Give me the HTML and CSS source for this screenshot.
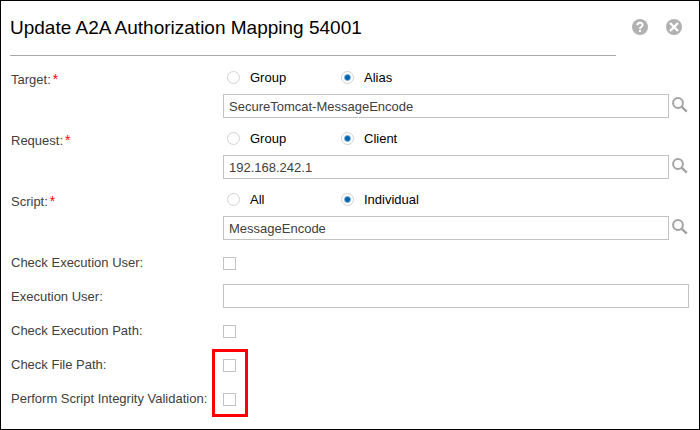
FILE: index.html
```html
<!DOCTYPE html>
<html lang="en">
<head>
<meta charset="utf-8">
<title>Update A2A Authorization Mapping 54001</title>
<link rel="stylesheet" href="styles.css">
</head>
<body>
<svg class="symbols" aria-hidden="true">
  <symbol id="search" viewBox="0 0 16 16">
    <circle cx="6" cy="6" r="4.9" fill="none" stroke="#a3a3a3" stroke-width="2"/>
    <path d="M9.6 9.6 L14.8 14.6" fill="none" stroke="#a3a3a3" stroke-width="2.4"/>
  </symbol>
</svg>
<main class="dialog">
  <header class="header">
    <h1 class="title">Update A2A Authorization Mapping 54001</h1>
    <div class="actions">
      <button class="icon-button" type="button" aria-label="Help">
        <svg width="16" height="16" viewBox="0 0 16 16">
          <circle cx="8" cy="8" r="8" fill="#b1b1b1"/>
          <path d="M5.4 6.3 C5.4 3 10.6 3 10.6 6 C10.6 7.8 8 7.7 8 9.9" fill="none" stroke="#fff" stroke-width="2"/>
          <rect x="7" y="11" width="2" height="2" fill="#fff"/>
        </svg>
      </button>
      <button class="icon-button" type="button" aria-label="Close">
        <svg width="16" height="16" viewBox="0 0 16 16">
          <circle cx="8" cy="8" r="8" fill="#b1b1b1"/>
          <path d="M4 4 L12 12 M12 4 L4 12" fill="none" stroke="#fff" stroke-width="2.4"/>
        </svg>
      </button>
    </div>
  </header>
  <form class="form">
    <div class="row">
      <label class="label" for="target">Target:<span class="required">*</span></label>
      <div class="field">
        <div class="choices">
          <label class="choice"><input class="radio" type="radio" name="target-kind">Group</label>
          <label class="choice"><input class="radio" type="radio" name="target-kind" checked>Alias</label>
        </div>
        <div class="lookup">
          <input class="text" id="target" type="text" value="SecureTomcat-MessageEncode">
          <button class="icon-button" type="button" aria-label="Find target"><svg width="16" height="16"><use href="#search"/></svg></button>
        </div>
      </div>
    </div>
    <div class="row">
      <label class="label" for="request">Request:<span class="required">*</span></label>
      <div class="field">
        <div class="choices">
          <label class="choice"><input class="radio" type="radio" name="request-kind">Group</label>
          <label class="choice"><input class="radio" type="radio" name="request-kind" checked>Client</label>
        </div>
        <div class="lookup">
          <input class="text" id="request" type="text" value="192.168.242.1">
          <button class="icon-button" type="button" aria-label="Find request"><svg width="16" height="16"><use href="#search"/></svg></button>
        </div>
      </div>
    </div>
    <div class="row">
      <label class="label" for="script">Script:<span class="required">*</span></label>
      <div class="field">
        <div class="choices">
          <label class="choice"><input class="radio" type="radio" name="script-kind">All</label>
          <label class="choice"><input class="radio" type="radio" name="script-kind" checked>Individual</label>
        </div>
        <div class="lookup">
          <input class="text" id="script" type="text" value="MessageEncode">
          <button class="icon-button" type="button" aria-label="Find script"><svg width="16" height="16"><use href="#search"/></svg></button>
        </div>
      </div>
    </div>
    <div class="row">
      <label class="label" for="check-user">Check Execution User:</label>
      <input class="checkbox" id="check-user" type="checkbox">
    </div>
    <div class="row">
      <label class="label" for="user">Execution User:</label>
      <input class="text" id="user" type="text">
    </div>
    <div class="row">
      <label class="label" for="check-path">Check Execution Path:</label>
      <input class="checkbox" id="check-path" type="checkbox">
    </div>
    <div class="highlighted">
      <div class="row">
        <label class="label" for="check-file">Check File Path:</label>
        <input class="checkbox" id="check-file" type="checkbox">
      </div>
      <div class="row">
        <label class="label" for="integrity">Perform Script Integrity Validation:</label>
        <input class="checkbox" id="integrity" type="checkbox">
      </div>
    </div>
  </form>
</main>
</body>
</html>
```
FILE: styles.css
```css
*,
*::after {
  box-sizing: border-box;
}

body {
  margin: 0;
  background: #fff;
  color: #404040;
  font: 13px/26px "Liberation Sans", Arial, sans-serif;
}

.symbols {
  display: none;
}

.dialog {
  min-height: 100vh;
  border: 1px solid #000;
}

.header {
  display: flex;
  gap: 16px;
  padding: 0 17px 0 9px;
}

.title {
  flex: 1;
  margin: 0;
  padding: 15px 0;
  border-bottom: 1px solid #a8a8a8;
  color: #000;
  font-size: 19px;
  font-weight: normal;
  line-height: 24px;
}

.actions {
  display: flex;
  align-items: flex-start;
  gap: 18px;
  padding-top: 18px;
}

.icon-button {
  display: block;
  flex: none;
  width: 16px;
  height: 16px;
  padding: 0;
  border: 0;
  background: none;
}

.icon-button svg {
  display: block;
}

.form {
  padding: 7px 10px 12px;
}

.row {
  display: grid;
  grid-template-columns: 212px 1fr;
  align-items: start;
  padding: 4px 0;
}

.field {
  padding-bottom: 2px;
}

.required {
  margin-left: 2px;
  color: #f00;
  font-size: 14px;
  line-height: 1;
}

.choices {
  display: flex;
  padding: 0 0 5px 4px;
}

.choice {
  display: flex;
  align-items: center;
  gap: 10px;
  width: 114px;
  color: #000;
  line-height: 22px;
}

.radio {
  appearance: none;
  width: 13px;
  height: 13px;
  margin: 0 0 2px;
  border: 1px solid #d2d2d2;
  border-radius: 50%;
}

.radio:checked {
  background: radial-gradient(circle, #0064ad 2px, transparent 4px);
}

.lookup {
  display: flex;
  align-items: flex-start;
  gap: 3px;
}

.lookup .icon-button {
  width: 17px;
  padding-top: 3px;
}

.text {
  flex: 1;
  width: 100%;
  min-width: 0;
  height: 24px;
  padding: 1px 5px 0;
  border: 1px solid #c3c3c3;
  border-radius: 0;
  background: #fff;
  color: #404040;
  font: inherit;
  line-height: 20px;
}

.checkbox {
  appearance: none;
  width: 13px;
  height: 13px;
  margin: 7px 0 0;
  border: 1px solid #c3c3c3;
}

.highlighted {
  position: relative;
}

.highlighted::after {
  content: "";
  position: absolute;
  top: 1px;
  left: 201px;
  width: 36px;
  height: 68px;
  border: 3px solid #f00;
  pointer-events: none;
}
```
